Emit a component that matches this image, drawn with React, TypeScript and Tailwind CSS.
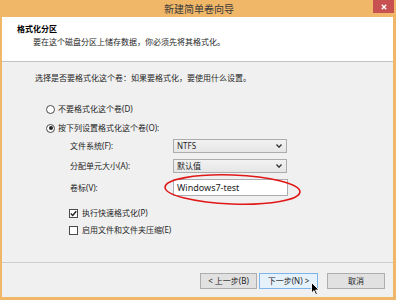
import React from "react";

const font = { fontFamily: '"Noto Sans", "Noto Sans CJK SC", sans-serif' };

function Radio({ checked, label }: { checked?: boolean; label: string }) {
  return (
    <div className="flex items-center h-[12px] pl-[44px] gap-[3px]">
      <div className="w-[9px] h-[9px] rounded-full border border-[#4a4a4a] bg-white flex items-center justify-center">
        {checked && <div className="w-[4px] h-[4px] rounded-full bg-[#222]" />}
      </div>
      <span>{label}</span>
    </div>
  );
}

function Check({ checked, label }: { checked?: boolean; label: string }) {
  return (
    <div className="flex items-center h-[12px] pl-[67px] gap-[4px]">
      <div className="w-[9px] h-[9px] border border-[#4a4a4a] bg-white flex items-center justify-center">
        {checked && (
          <svg width="7" height="7" viewBox="0 0 7 7">
            <path d="M0.8 3.6 L2.7 5.5 L6.3 1.2" fill="none" stroke="#222" strokeWidth="1.4" />
          </svg>
        )}
      </div>
      <span>{label}</span>
    </div>
  );
}

function Select({ value }: { value: string }) {
  return (
    <div className="w-[114px] h-[14px] border border-[#acacac] bg-gradient-to-b from-[#f2f2f2] to-[#e6e6e6] flex items-center justify-between pl-[3px] pr-[4px]">
      <span className="text-[8px] leading-[12px]">{value}</span>
      <svg width="6" height="4" viewBox="0 0 6 4">
        <path d="M0.5 0.5 L3 3.2 L5.5 0.5" fill="none" stroke="#333" strokeWidth="1.3" />
      </svg>
    </div>
  );
}

function Btn({ children, primary }: { children: React.ReactNode; primary?: boolean }) {
  return (
    <div
      className={
        "h-[16px] flex items-center justify-center border text-[8px] leading-[12px] " +
        (primary ? "border-[#7eb4ea] bg-[#e5f1fb]" : "border-[#adadad] bg-[#e1e1e1]")
      }
    >
      {children}
    </div>
  );
}

export default function App() {
  return (
    <div className="w-[396px] h-[300px] bg-[#f1b769] flex flex-col text-[#1e1e1e] overflow-hidden" style={font}>
      {/* title bar */}
      <div className="relative h-[17px] flex items-center justify-center">
        <span className="text-[10px] leading-[14px] text-[#3a3a3a] pl-[2px]">新建简单卷向导</span>
        <div className="absolute right-[2px] top-0 w-[21px] h-[13px] bg-[#c75050] flex items-center justify-center">
          <svg width="6" height="6" viewBox="0 0 6 6">
            <path d="M0.8 0.8 L5.2 5.2 M5.2 0.8 L0.8 5.2" stroke="#fff" strokeWidth="1.4" />
          </svg>
        </div>
      </div>
      {/* body */}
      <div className="flex-1 ml-[2px] mr-[3px] mb-[3px] flex flex-col bg-[#f0f0f0]">
        {/* header */}
        <div className="h-[45px] bg-white border-b border-[#c3c3c3] pl-[15px] pt-[6px] text-[8px] leading-[12px]">
          <div className="font-bold text-black">格式化分区</div>
          <div className="pl-[16px] mt-[1px]">要在这个磁盘分区上储存数据，你必须先将其格式化。</div>
        </div>
        {/* content */}
        <div className="flex-1 flex flex-col text-[8px] leading-[12px]">
          <div className="mt-[10px] pl-[33px] h-[12px]">选择是否要格式化这个卷：如果要格式化，要使用什么设置。</div>
          <div className="mt-[19px]">
            <Radio label="不要格式化这个卷(D)" />
          </div>
          <div className="mt-[7px]">
            <Radio checked label="按下列设置格式化这个卷(O):" />
          </div>
          <div className="mt-[5px] flex items-center pl-[68px]">
            <span className="w-[103px]">文件系统(F):</span>
            <Select value="NTFS" />
          </div>
          <div className="mt-[6px] flex items-center pl-[68px]">
            <span className="w-[103px]">分配单元大小(A):</span>
            <Select value="默认值" />
          </div>
          <div className="mt-[6px] flex items-center pl-[68px]">
            <span className="w-[103px]">卷标(V):</span>
            <div className="relative">
              <div className="w-[115px] h-[17px] border border-[#abadb3] bg-white flex items-center pl-[3px] text-[9px] leading-[12px]">
                Windows7-test
              </div>
              <svg
                className="absolute left-[-10px] top-[-6px] pointer-events-none"
                width="139"
                height="33"
                viewBox="0 0 139 33"
              >
                <ellipse
                  cx="69.5"
                  cy="16.5"
                  rx="67.5"
                  ry="14.5"
                  fill="none"
                  stroke="#e01818"
                  strokeWidth="1.6"
                  transform="rotate(2 69.5 16.5)"
                />
              </svg>
            </div>
          </div>
          <div className="mt-[11px]">
            <Check checked label="执行快速格式化(P)" />
          </div>
          <div className="mt-[5px]">
            <Check label="启用文件和文件夹压缩(E)" />
          </div>
        </div>
        {/* separator */}
        <div className="h-[1px] bg-[#cdcdcd]" />
        {/* footer */}
        <div className="h-[34px] flex justify-end items-start pt-[10px] pr-[8px]">
          <div className="w-[57px]">
            <Btn>&lt; 上一步(B)</Btn>
          </div>
          <div className="w-[59px] ml-[2px] relative">
            <Btn primary>下一步(N) &gt;</Btn>
            <svg className="absolute left-[52px] top-[9px]" width="9" height="14" viewBox="0 0 9 14">
              <path
                d="M0.5 0.5 L0.5 11 L3 8.6 L4.8 12.8 L6.4 12.1 L4.6 8 L8 8 Z"
                fill="#000"
                stroke="#fff"
                strokeWidth="0.9"
                strokeLinejoin="round"
              />
            </svg>
          </div>
          <div className="w-[58px] ml-[9px]">
            <Btn>取消</Btn>
          </div>
        </div>
      </div>
    </div>
  );
}
